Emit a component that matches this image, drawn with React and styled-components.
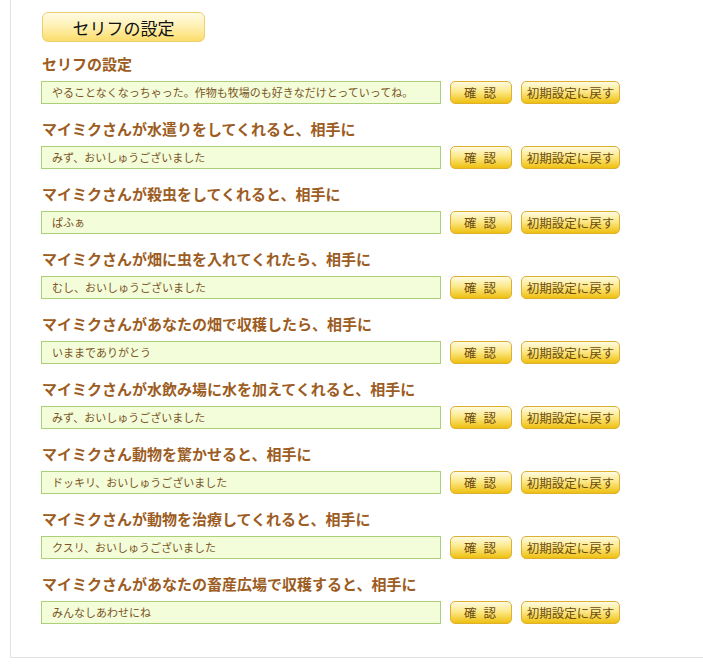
import React from 'react'
import styled, { createGlobalStyle } from 'styled-components'

const GlobalStyle = createGlobalStyle`
  body {
    margin: 0;
    background: #fff;
    font-family: "Noto Sans CJK JP", "Noto Sans", sans-serif;
  }
`

const Page = styled.div`
  margin-left: 10px;
  border-left: 1px solid #e2e2e2;
  border-bottom: 1px solid #e2e2e2;
  padding: 12px 0 33px 30px;
`

const TabButton = styled.div`
  width: 161px;
  height: 28px;
  margin-left: 1px;
  display: flex;
  align-items: center;
  justify-content: center;
  border: 1px solid #ecd070;
  border-radius: 6px;
  background: linear-gradient(to bottom, #fffbe4 0%, #fff0b0 50%, #fbdc6a 100%);
  font-size: 17px;
  color: #111;
  margin-bottom: 13px;
`

const Section = styled.div`
  margin-bottom: 16px;
  &:last-child { margin-bottom: 0; }
`

const Title = styled.h3`
  margin: 0 0 8px 1px;
  font-size: 15px;
  line-height: 18px;
  font-weight: bold;
  color: #9c5c22;
  white-space: nowrap;
`

const Row = styled.div`
  display: flex;
  align-items: center;
`

const Field = styled.div`
  box-sizing: border-box;
  width: 400px;
  height: 23px;
  border: 1px solid #acd078;
  background: #f3fdd9;
  padding-left: 10px;
  font-size: 11px;
  line-height: 21px;
  color: #7a5424;
  white-space: nowrap;
  overflow: hidden;
`

const Button = styled.button`
  box-sizing: border-box;
  width: ${p => p.$w}px;
  height: 23px;
  margin-left: ${p => p.$gap}px;
  padding: 0;
  border: 1px solid #dcb030;
  border-radius: 5px;
  background: linear-gradient(to bottom, #fffbe0 0%, #fce98a 45%, #efc010 100%);
  font-family: inherit;
  font-size: ${p => p.$fs || 12}px;
  color: #6e4c10;
  letter-spacing: ${p => p.$ls || 0}px;
  white-space: nowrap;
  cursor: pointer;
`

const lines = [
  ['セリフの設定', 'やることなくなっちゃった。作物も牧場のも好きなだけとっていってね。'],
  ['マイミクさんが水遣りをしてくれると、相手に', 'みず、おいしゅうございました'],
  ['マイミクさんが殺虫をしてくれると、相手に', 'ぱふぁ'],
  ['マイミクさんが畑に虫を入れてくれたら、相手に', 'むし、おいしゅうございました'],
  ['マイミクさんがあなたの畑で収穫したら、相手に', 'いままでありがとう'],
  ['マイミクさんが水飲み場に水を加えてくれると、相手に', 'みず、おいしゅうございました'],
  ['マイミクさん動物を驚かせると、相手に', 'ドッキリ、おいしゅうございました'],
  ['マイミクさんが動物を治療してくれると、相手に', 'クスリ、おいしゅうございました'],
  ['マイミクさんがあなたの畜産広場で収穫すると、相手に', 'みんなしあわせにね'],
]

export default function App() {
  return (
    <>
      <GlobalStyle />
      <Page>
        <TabButton>セリフの設定</TabButton>
        {lines.map(([title, text], i) => (
          <Section key={i}>
            <Title>{title}</Title>
            <Row>
              <Field>{text}</Field>
              <Button $w={62} $gap={9} $fs={12.5} $ls={2}>確 認</Button>
              <Button $w={99} $gap={9} $fs={12.5}>初期設定に戻す</Button>
            </Row>
          </Section>
        ))}
      </Page>
    </>
  )
}
